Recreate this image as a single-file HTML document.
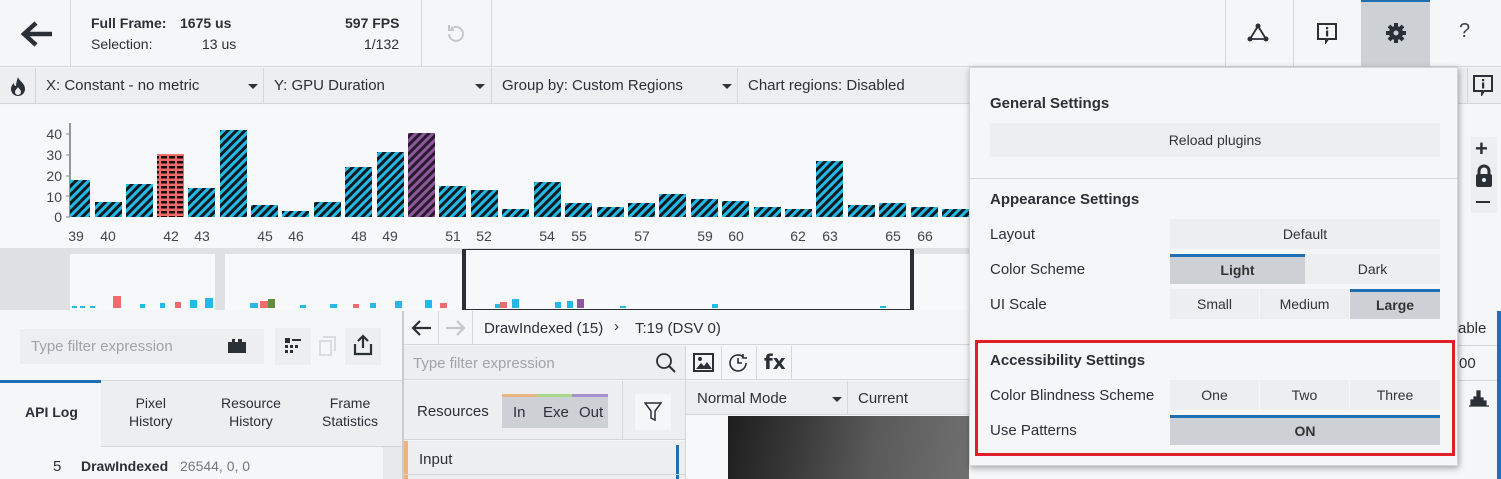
<!DOCTYPE html>
<html><head><meta charset="utf-8"><style>
*{box-sizing:border-box;margin:0;padding:0}
body{width:1501px;height:479px;overflow:hidden;background:#f5f6f8;font-family:"Liberation Sans",sans-serif;color:#2b2f36;position:relative;font-size:14px}
.a{position:absolute}
.t{position:absolute;white-space:nowrap}
.b{font-weight:bold}
.vl{position:absolute;width:1px;background:#d4d6da}
.hl{position:absolute;height:1px;background:#d4d6da}
.btn{position:absolute;background:#eceef0;text-align:center;color:#333;font-size:14px}
.sel{background:#cdd0d4;border-top:3px solid #1f6fb2;font-weight:bold}
.tri{position:absolute;width:0;height:0;border-left:5px solid transparent;border-right:5px solid transparent;border-top:5px solid #333}
</style></head><body>
<!-- top bar -->
<div class="a" style="left:0;top:0;width:1501px;height:67px;background:#f5f6f8;border-bottom:1px solid #d4d6da"></div>
<svg class="a" style="left:20px;top:20px" width="34" height="28" viewBox="0 0 34 28"><path d="M32 14H5M16 3L4 14l12 11" stroke="#2b2f36" stroke-width="4.5" fill="none"/></svg>
<div class="vl" style="left:70px;top:0;height:67px"></div>
<div class="t b" style="left:91px;top:15px;font-size:14px">Full Frame:</div>
<div class="t b" style="left:180px;top:15px;font-size:14px">1675 us</div>
<div class="t" style="left:91px;top:36px;font-size:14px">Selection:</div>
<div class="t" style="left:202px;top:36px;font-size:14px">13 us</div>
<div class="t b" style="left:345px;top:15px;font-size:14px">597 FPS</div>
<div class="t" style="left:364px;top:36px;font-size:14px">1/132</div>
<div class="vl" style="left:421px;top:0;height:67px"></div>
<svg class="a" style="left:444px;top:22px" width="24" height="24" viewBox="0 0 24 24"><path d="M5 12a7 7 0 1 0 2-5M5 3v5h5" stroke="#c4c7cc" stroke-width="2" fill="none"/></svg>
<div class="vl" style="left:491px;top:0;height:67px"></div>
<div class="vl" style="left:1225px;top:0;height:67px"></div>
<div class="vl" style="left:1293px;top:0;height:67px"></div>
<svg class="a" style="left:1247px;top:23px" width="22" height="20" viewBox="0 0 22 20"><path d="M11 3L3 16h16z" stroke="#2b2f36" stroke-width="1.8" fill="none"/><circle cx="11" cy="3" r="2.5" fill="#2b2f36"/><circle cx="3" cy="16" r="2.5" fill="#2b2f36"/><circle cx="19" cy="16" r="2.5" fill="#2b2f36"/></svg>
<svg class="a" style="left:1316px;top:22px" width="22" height="22" viewBox="0 0 22 22"><path d="M2 2h18v15h-8l-2 3v-3H2z" stroke="#2b2f36" stroke-width="2" fill="none"/><rect x="10" y="5" width="2.2" height="2.2" fill="#2b2f36"/><rect x="10" y="8.5" width="2.2" height="6" fill="#2b2f36"/></svg>
<div class="a" style="left:1361px;top:0;width:69px;height:67px;background:#cdd0d4;border-top:2px solid #1f6fb2"></div>
<svg class="a" style="left:1385px;top:22px" width="22" height="22" viewBox="0 0 22 22"><g fill="#2b2f36"><circle cx="11" cy="11" r="7"/><g stroke="#2b2f36" stroke-width="4"><path d="M11 1v20M1 11h20M4 4l14 14M18 4L4 18"/></g></g><circle cx="11" cy="11" r="2.5" fill="#cdd0d4"/></svg>
<div class="t" style="left:1459px;top:20px;font-size:20px;color:#444">?</div>

<!-- toolbar row -->
<div class="a" style="left:0;top:68px;width:1501px;height:36px;background:#eceef0;border-bottom:1px solid #d4d6da"></div>
<svg class="a" style="left:9px;top:76px" width="18" height="20" viewBox="0 0 18 20"><path d="M9 1c1 4 7 6 7 12a7 7 0 0 1-14 0c0-3 2-5 3-6 0 2 1 3 2 3 0-3 1-6 2-9z" fill="#2b2f36"/><path d="M9 19a3 3 0 0 1-3-3c0-2 2-3 3-5 1 2 3 3 3 5a3 3 0 0 1-3 3z" fill="#eceef0"/></svg>
<div class="vl" style="left:35px;top:68px;height:36px"></div>
<div class="t" style="left:46px;top:77px;font-size:15px">X: Constant - no metric</div>
<div class="tri" style="left:248px;top:84px"></div>
<div class="vl" style="left:263px;top:68px;height:36px"></div>
<div class="t" style="left:274px;top:77px;font-size:15px">Y: GPU Duration</div>
<div class="tri" style="left:475px;top:84px"></div>
<div class="vl" style="left:491px;top:68px;height:36px"></div>
<div class="t" style="left:502px;top:77px;font-size:15px">Group by: Custom Regions</div>
<div class="tri" style="left:722px;top:84px"></div>
<div class="vl" style="left:737px;top:68px;height:36px"></div>
<div class="t" style="left:748px;top:77px;font-size:15px">Chart regions: Disabled</div>
<div class="vl" style="left:1467px;top:68px;height:36px"></div>
<svg class="a" style="left:1472px;top:74px" width="22" height="22" viewBox="0 0 22 22"><path d="M2 2h18v15h-8l-2 3v-3H2z" stroke="#2b2f36" stroke-width="2" fill="none"/><rect x="10" y="5" width="2.2" height="2.2" fill="#2b2f36"/><rect x="10" y="8.5" width="2.2" height="6" fill="#2b2f36"/></svg>

<!-- chart -->
<div class="a" style="left:0;top:105px;width:1501px;height:143px;background:#f7f8fa"></div>
<svg class="a" style="left:0;top:0" width="975" height="250">
<defs>
<pattern id="c" width="6" height="6" patternUnits="userSpaceOnUse" patternTransform="rotate(45)"><rect width="6" height="6" fill="#25b9e6"/><rect width="3" height="6" fill="#0d1a22"/></pattern>
<pattern id="p" width="6" height="6" patternUnits="userSpaceOnUse" patternTransform="rotate(45)"><rect width="6" height="6" fill="#8c5a9a"/><rect width="3" height="6" fill="#2a1a30"/></pattern>
<pattern id="r" width="8" height="5" patternUnits="userSpaceOnUse"><rect width="8" height="5" fill="#ee6b6e"/><rect x="1" y="1" width="6" height="2.5" fill="#1a0a0a"/></pattern>
</defs>
<path d="M70 123V217" stroke="#333" stroke-width="1"/>
<g font-size="14" fill="#444" text-anchor="end" font-family="Liberation Sans">
<text x="62" y="139">40</text><text x="62" y="160">30</text><text x="62" y="181">20</text><text x="62" y="202">10</text><text x="62" y="222">0</text></g>
<g stroke="#888"><path d="M66 134h4M66 155h4M66 176h4M66 196h4M66 217h4"/></g>
<g fill="url(#c)">
<rect x="70" y="180" width="20" height="37"/>
<rect x="95" y="202" width="27" height="15"/>
<rect x="126" y="184" width="27" height="33"/>
<rect x="188" y="188" width="27" height="29"/>
<rect x="220" y="130" width="27" height="87"/>
<rect x="251" y="205" width="27" height="12"/>
<rect x="282" y="211" width="27" height="6"/>
<rect x="314" y="202" width="27" height="15"/>
<rect x="345" y="167" width="27" height="50"/>
<rect x="377" y="152" width="27" height="65"/>
<rect x="439" y="186" width="27" height="31"/>
<rect x="471" y="190" width="27" height="27"/>
<rect x="502" y="209" width="27" height="8"/>
<rect x="534" y="182" width="27" height="35"/>
<rect x="565" y="203" width="27" height="14"/>
<rect x="597" y="207" width="27" height="10"/>
<rect x="628" y="203" width="27" height="14"/>
<rect x="659" y="194" width="27" height="23"/>
<rect x="691" y="199" width="27" height="18"/>
<rect x="722" y="201" width="27" height="16"/>
<rect x="754" y="207" width="27" height="10"/>
<rect x="785" y="209" width="27" height="8"/>
<rect x="816" y="161" width="27" height="56"/>
<rect x="848" y="205" width="27" height="12"/>
<rect x="879" y="203" width="27" height="14"/>
<rect x="911" y="207" width="27" height="10"/>
<rect x="942" y="209" width="27" height="8"/>
</g>
<rect x="157" y="154" width="27" height="63" fill="url(#r)"/>
<rect x="408" y="133" width="27" height="84" fill="url(#p)"/>
<g font-size="14" fill="#444" text-anchor="middle" font-family="Liberation Sans">
<text x="76" y="241">39</text><text x="108" y="241">40</text><text x="171" y="241">42</text><text x="202" y="241">43</text><text x="265" y="241">45</text><text x="296" y="241">46</text><text x="359" y="241">48</text><text x="390" y="241">49</text><text x="453" y="241">51</text><text x="484" y="241">52</text><text x="547" y="241">54</text><text x="579" y="241">55</text><text x="642" y="241">57</text><text x="705" y="241">59</text><text x="736" y="241">60</text><text x="798" y="241">62</text><text x="830" y="241">63</text><text x="893" y="241">65</text><text x="925" y="241">66</text></g>
</svg>

<!-- minimap -->
<div class="a" style="left:0;top:248px;width:1501px;height:62px;background:#e0e1e3"></div>
<div class="a" style="left:70px;top:254px;width:145px;height:56px;background:#f7f8fa"></div>
<div class="a" style="left:225px;top:254px;width:237px;height:56px;background:#f7f8fa"></div>
<div class="a" style="left:462px;top:249px;width:452px;height:61px;background:#f7f8fa;border:1px solid #2b2f36;border-width:1px 4px 1px 4px"></div>
<div class="a" style="left:914px;top:254px;width:56px;height:56px;background:#f7f8fa"></div>
<svg class="a" style="left:0;top:290px" width="970" height="20">
<g fill="#25b9e6"><rect x="72" y="16" width="5" height="2"/><rect x="80" y="16" width="5" height="2"/><rect x="90" y="16" width="5" height="2"/><rect x="140" y="14" width="5" height="4"/><rect x="160" y="13" width="5" height="5"/><rect x="190" y="10" width="7" height="8"/><rect x="205" y="8" width="8" height="10"/><rect x="250" y="13" width="8" height="5"/><rect x="300" y="15" width="6" height="3"/><rect x="330" y="14" width="7" height="4"/><rect x="370" y="13" width="6" height="5"/><rect x="395" y="11" width="7" height="7"/><rect x="425" y="10" width="7" height="8"/><rect x="495" y="14" width="6" height="4"/><rect x="512" y="9" width="7" height="9"/><rect x="555" y="12" width="6" height="6"/><rect x="567" y="11" width="6" height="7"/><rect x="620" y="16" width="6" height="2"/><rect x="712" y="14" width="6" height="4"/><rect x="880" y="16" width="6" height="2"/></g>
<g fill="#ee6b6e"><rect x="113" y="6" width="8" height="12"/><rect x="175" y="12" width="6" height="6"/><rect x="260" y="11" width="8" height="7"/><rect x="353" y="14" width="6" height="4"/><rect x="440" y="13" width="7" height="5"/><rect x="500" y="12" width="7" height="6"/></g>
<rect x="268" y="9" width="7" height="9" fill="#6a8a40"/><rect x="577" y="9" width="7" height="9" fill="#8c5a9a"/>
</svg>

<!-- bottom left panel -->
<div class="a" style="left:0;top:311px;width:402px;height:168px;background:#f5f6f8"></div>
<div class="a" style="left:20px;top:329px;width:244px;height:35px;background:#eceef0"></div>
<div class="t" style="left:31px;top:338px;font-size:15px;color:#a0a4aa">Type filter expression</div>
<div class="a" style="left:228px;top:339px;width:18px;height:14px;background:#2b2f36;border-top:3px dotted #eceef0"></div>
<div class="a" style="left:275px;top:328px;width:36px;height:37px;background:#eceef0"></div>
<svg class="a" style="left:284px;top:337px" width="18" height="18" viewBox="0 0 18 18"><g fill="#2b2f36"><rect x="1" y="1" width="5" height="5"/><rect x="8" y="2" width="9" height="2"/><rect x="1" y="8" width="3" height="3"/><rect x="6" y="8" width="3" height="3"/><rect x="11" y="8" width="3" height="3"/><rect x="1" y="13" width="3" height="3"/><rect x="6" y="13" width="3" height="3"/></g></svg>
<svg class="a" style="left:318px;top:335px" width="20" height="22" viewBox="0 0 20 22"><path d="M5 2h12v14M2 6h11v14H2z" stroke="#d0d3d7" stroke-width="1.5" fill="none"/></svg>
<div class="a" style="left:345px;top:328px;width:36px;height:37px;background:#eceef0"></div>
<svg class="a" style="left:353px;top:334px" width="20" height="22" viewBox="0 0 20 22"><path d="M10 14V2M5 7l5-5 5 5M2 10v10h16V10" stroke="#2b2f36" stroke-width="2.2" fill="none"/></svg>
<div class="hl" style="left:0;top:380px;width:402px"></div>
<div class="a" style="left:101px;top:381px;width:301px;height:66px;background:#eceef0;border-bottom:1px solid #d4d6da"></div>
<div class="a" style="left:0;top:380px;width:101px;height:3px;background:#1f6fb2"></div>
<div class="t b" style="left:25px;top:404px;font-size:14px">API Log</div>
<div class="t" style="left:129px;top:394px;font-size:14px;text-align:center;line-height:18px">Pixel<br>History</div>
<div class="t" style="left:221px;top:394px;font-size:14px;text-align:center;line-height:18px">Resource<br>History</div>
<div class="t" style="left:322px;top:394px;font-size:14px;text-align:center;line-height:18px">Frame<br>Statistics</div>
<div class="a" style="left:383px;top:447px;width:19px;height:32px;background:#e6e8ea"></div>
<div class="t" style="left:53px;top:458px;font-size:15px">5</div>
<div class="t b" style="left:81px;top:458px;font-size:14px">DrawIndexed</div>
<div class="t" style="left:180px;top:458px;font-size:14px;color:#777">26544, 0, 0</div>

<!-- middle panel -->
<div class="vl" style="left:402px;top:311px;height:168px;background:#c8cbd0;width:2px"></div>
<div class="a" style="left:404px;top:311px;width:565px;height:34px;background:#f5f6f8;border-bottom:1px solid #d4d6da"></div>
<svg class="a" style="left:410px;top:319px" width="22" height="18" viewBox="0 0 22 18"><path d="M21 9H3M10 2L3 9l7 7" stroke="#2b2f36" stroke-width="2.2" fill="none"/></svg>
<div class="vl" style="left:438px;top:311px;height:34px"></div>
<svg class="a" style="left:445px;top:319px" width="22" height="18" viewBox="0 0 22 18"><path d="M1 9h18M12 2l7 7-7 7" stroke="#c4c7cc" stroke-width="2.2" fill="none"/></svg>
<div class="vl" style="left:472px;top:311px;height:34px"></div>
<div class="t" style="left:484px;top:320px;font-size:15px">DrawIndexed (15)</div>
<div class="t" style="left:614px;top:318px;font-size:15px">›</div>
<div class="t" style="left:635px;top:320px;font-size:15px">T:19 (DSV 0)</div>
<div class="a" style="left:404px;top:346px;width:281px;height:34px;background:#eceef0;border-bottom:1px solid #d4d6da"></div>
<div class="t" style="left:413px;top:355px;font-size:15px;color:#a0a4aa">Type filter expression</div>
<svg class="a" style="left:655px;top:352px" width="22" height="22" viewBox="0 0 22 22"><circle cx="9" cy="9" r="7" stroke="#2b2f36" stroke-width="1.8" fill="none"/><path d="M14 14l6 6" stroke="#2b2f36" stroke-width="2"/></svg>
<div class="vl" style="left:685px;top:346px;height:133px"></div>
<div class="a" style="left:404px;top:381px;width:281px;height:59px;background:#eceef0;border-bottom:1px solid #d4d6da"></div>
<div class="t" style="left:417px;top:403px;font-size:15px">Resources</div>
<div class="a" style="left:502px;top:394px;width:106px;height:34px;background:#cdd0d4"></div>
<div class="a" style="left:502px;top:394px;width:35px;height:3px;background:#eab384"></div>
<div class="a" style="left:537px;top:394px;width:35px;height:3px;background:#a8d88a"></div>
<div class="a" style="left:572px;top:394px;width:36px;height:3px;background:#a792d0"></div>
<div class="t" style="left:513px;top:404px;font-size:15px">In</div>
<div class="t" style="left:543px;top:404px;font-size:15px">Exe</div>
<div class="t" style="left:579px;top:404px;font-size:15px">Out</div>
<div class="vl" style="left:622px;top:381px;height:59px"></div>
<div class="a" style="left:635px;top:394px;width:36px;height:36px;background:#f5f6f8"></div>
<svg class="a" style="left:644px;top:402px" width="18" height="20" viewBox="0 0 18 20"><path d="M1 1h16l-6 8v9l-4-2V9z" stroke="#2b2f36" stroke-width="1.5" fill="none"/></svg>
<div class="a" style="left:404px;top:441px;width:281px;height:38px;background:#eceef0"></div>
<div class="a" style="left:404px;top:441px;width:4px;height:38px;background:#eab384"></div>
<div class="t" style="left:419px;top:451px;font-size:15px">Input</div>
<div class="a" style="left:676px;top:445px;width:3px;height:34px;background:#1f6fb2"></div>
<div class="hl" style="left:404px;top:474px;width:281px"></div>

<!-- right sub-panel -->
<div class="a" style="left:686px;top:346px;width:283px;height:34px;background:#f5f6f8;border-bottom:1px solid #d4d6da"></div>
<svg class="a" style="left:693px;top:353px" width="21" height="19" viewBox="0 0 21 19"><rect x="1" y="1" width="19" height="17" stroke="#2b2f36" stroke-width="2" fill="none"/><path d="M3 16l5-6 3 3 3-4 5 7z" fill="#2b2f36"/><circle cx="7" cy="6" r="2" fill="#2b2f36"/></svg>
<div class="vl" style="left:721px;top:346px;height:34px"></div>
<svg class="a" style="left:727px;top:352px" width="22" height="22" viewBox="0 0 22 22"><path d="M19 11a8 8 0 1 1-3-6.3" stroke="#2b2f36" stroke-width="1.6" fill="none"/><path d="M16 2v4h4" stroke="#2b2f36" stroke-width="1.6" fill="none"/><path d="M11 6v5h4" stroke="#2b2f36" stroke-width="1.6" fill="none"/></svg>
<div class="vl" style="left:756px;top:346px;height:34px"></div>
<div class="t b" style="left:764px;top:350px;font-size:20px;font-family:'DejaVu Sans',sans-serif">fx</div>
<div class="vl" style="left:791px;top:346px;height:34px"></div>
<div class="a" style="left:686px;top:381px;width:283px;height:34px;background:#eceef0;border-bottom:1px solid #d4d6da"></div>
<div class="t" style="left:697px;top:390px;font-size:15px">Normal Mode</div>
<div class="tri" style="left:832px;top:397px"></div>
<div class="vl" style="left:847px;top:381px;height:34px"></div>
<div class="t" style="left:858px;top:390px;font-size:15px">Current</div>
<div class="a" style="left:686px;top:416px;width:42px;height:63px;background:#f7f8fa"></div>
<div class="a" style="left:728px;top:416px;width:241px;height:63px;background:linear-gradient(100deg,#1e1e1e 0%,#3a3a3a 30%,#5a5a5a 60%,#707070 100%)"></div>

<!-- far right behind popup -->
<div class="a" style="left:1457px;top:105px;width:44px;height:205px;background:#f5f6f8"></div>
<div class="a" style="left:1471px;top:137px;width:26px;height:76px;background:#eceef0"></div>
<div class="t b" style="left:1475px;top:136px;font-size:22px">+</div>
<svg class="a" style="left:1474px;top:164px" width="20" height="24" viewBox="0 0 20 24"><path d="M5 10V7a5 5 0 0 1 10 0v3" stroke="#2b2f36" stroke-width="3" fill="none"/><rect x="2" y="10" width="16" height="13" rx="2" fill="#2b2f36"/><circle cx="10" cy="16" r="2" fill="#eceef0"/></svg>
<div class="a" style="left:1476px;top:201px;width:14px;height:2px;background:#2b2f36"></div>
<div class="a" style="left:1457px;top:311px;width:44px;height:168px;background:#f5f6f8"></div>
<div class="t" style="left:1458px;top:320px;font-size:15px">able</div>
<div class="hl" style="left:1457px;top:345px;width:44px"></div>
<div class="t" style="left:1459px;top:355px;font-size:15px">00</div>
<div class="hl" style="left:1457px;top:380px;width:44px"></div>
<svg class="a" style="left:1468px;top:388px" width="22" height="20" viewBox="0 0 22 20"><path d="M1 18h20M3 18v-6h3v-3h3v9M9 18V3h3v15M12 18v-8h3v3h3v5" fill="#2b2f36" stroke="#2b2f36" stroke-width="1.2"/></svg>
<div class="a" style="left:1497px;top:311px;width:4px;height:168px;background:#1f6fb2"></div>

<!-- settings popup -->
<div class="a" style="left:969px;top:67px;width:489px;height:399px;background:#f5f6f8;border:1px solid #d4d6da;box-shadow:1px 2px 6px rgba(0,0,0,0.35)"></div>
<div class="t b" style="left:990px;top:95px;font-size:15px">General Settings</div>
<div class="btn" style="left:990px;top:123px;width:450px;height:34px;line-height:34px">Reload plugins</div>
<div class="hl" style="left:970px;top:178px;width:487px"></div>
<div class="t b" style="left:990px;top:191px;font-size:15px">Appearance Settings</div>
<div class="t" style="left:990px;top:226px;font-size:15px">Layout</div>
<div class="btn" style="left:1170px;top:219px;width:270px;height:30px;line-height:30px">Default</div>
<div class="t" style="left:990px;top:261px;font-size:15px">Color Scheme</div>
<div class="btn sel" style="left:1170px;top:254px;width:135px;height:30px;line-height:27px">Light</div>
<div class="btn" style="left:1305px;top:254px;width:135px;height:30px;line-height:30px">Dark</div>
<div class="t" style="left:990px;top:296px;font-size:15px">UI Scale</div>
<div class="btn" style="left:1170px;top:289px;width:89px;height:30px;line-height:30px">Small</div>
<div class="btn" style="left:1260px;top:289px;width:89px;height:30px;line-height:30px">Medium</div>
<div class="btn sel" style="left:1350px;top:289px;width:90px;height:30px;line-height:27px">Large</div>
<div class="a" style="left:975px;top:340px;width:480px;height:116px;border:3px solid #e01f2b"></div>
<div class="t b" style="left:990px;top:352px;font-size:15px">Accessibility Settings</div>
<div class="t" style="left:990px;top:387px;font-size:15px">Color Blindness Scheme</div>
<div class="btn" style="left:1170px;top:380px;width:89px;height:30px;line-height:30px">One</div>
<div class="btn" style="left:1260px;top:380px;width:89px;height:30px;line-height:30px">Two</div>
<div class="btn" style="left:1350px;top:380px;width:90px;height:30px;line-height:30px">Three</div>
<div class="t" style="left:990px;top:422px;font-size:15px">Use Patterns</div>
<div class="btn sel" style="left:1170px;top:415px;width:270px;height:30px;line-height:27px">ON</div>
</body></html>
